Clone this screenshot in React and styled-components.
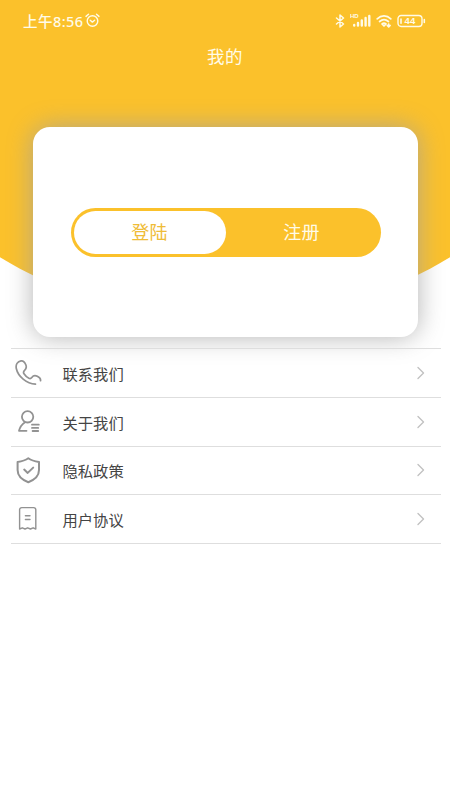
import React, { useState } from 'react'
import styled, { createGlobalStyle } from 'styled-components'

const GlobalStyle = createGlobalStyle`
  * {
    box-sizing: border-box;
  }
  body {
    margin: 0;
    background: #fff;
    font-family: 'Noto Sans CJK SC', sans-serif;
  }
`
const Page = styled.div`
  width: 450px;
  height: 800px;
  margin: 0 auto;
  overflow: hidden;
  background: #fff;
`
const Header = styled.header`
  height: 320px;
  background: #fbc12b;
  color: #fffbe8;
  clip-path: circle(435px at 50% -115px);
`
const StatusBar = styled.div`
  display: flex;
  align-items: center;
  justify-content: space-between;
  height: 40px;
  padding: 1px 24px 0 23px;
`
const StatusGroup = styled.div`
  display: flex;
  align-items: center;
  gap: ${(props) => props.$gap}px;
`
const Clock = styled.span`
  font-family: 'Noto Sans', 'Noto Sans CJK SC', sans-serif;
  font-size: 14.5px;
  font-weight: 500;
  line-height: 20px;
  letter-spacing: 0.45px;
`
const Title = styled.h1`
  margin: 3px 0 0;
  font-size: 17.5px;
  font-weight: 400;
  line-height: 26px;
  letter-spacing: 0.5px;
  text-align: center;
`
const LoginCard = styled.section`
  display: flex;
  align-items: center;
  justify-content: center;
  position: relative;
  width: 385px;
  height: 210px;
  margin: -193px 0 0 33px;
  border-radius: 17px;
  background: #fff;
  box-shadow: 0 0 26px rgba(160, 160, 160, 0.8);
`
const Switch = styled.div`
  display: flex;
  width: 310px;
  height: 49px;
  padding: 3px;
  border-radius: 25px;
  background: #fbc12b;
`
const SwitchBtn = styled.button`
  flex: 1;
  padding: 0 0 2px;
  border: none;
  border-radius: 22px;
  background: ${(props) => (props.$active ? '#fff' : 'transparent')};
  color: ${(props) => (props.$active ? '#efbc38' : '#fffbe8')};
  font-family: inherit;
  font-size: 18px;
  letter-spacing: 0.3px;
  cursor: pointer;
`
const Menu = styled.ul`
  position: relative;
  margin: 11px 9px 0 11px;
  padding: 0;
  list-style: none;
  border-top: 1px solid #dedede;
`
const MenuItem = styled.li`
  display: flex;
  align-items: center;
  height: 48.75px;
  padding: 0 15px 0 3px;
  border-bottom: 1px solid #dedede;
  cursor: pointer;
`
const MenuName = styled.span`
  flex: 1;
  margin-left: 20.5px;
  color: #444;
  font-size: 15.3px;
  line-height: 24px;
`
const Icon = styled.svg`
  display: block;
  flex: none;
  fill: none;
  stroke: currentColor;
  stroke-linecap: round;
  stroke-linejoin: round;
`
const MenuIcon = styled(Icon)`
  color: #929292;
`
const Arrow = styled(Icon)`
  color: #c2c2c2;
`

function AlarmIcon() {
  return (
    <Icon width="15" height="15" viewBox="0 0 15 15" strokeWidth="1.4">
      <circle cx="7.5" cy="8" r="5.3" />
      <path d="M5.2 7.3l2.2 1.8 2.2-1.8M1 3.4L3.5 1.3M14 3.4l-2.5-2.1" />
    </Icon>
  )
}

function BluetoothIcon() {
  return (
    <Icon width="10" height="14" viewBox="0 0 10 14" strokeWidth="1.5">
      <path d="M1.5 4l7 6L5 13V1l3.5 3-7 6" />
    </Icon>
  )
}

const HdText = styled.text`
  fill: currentColor;
  stroke: none;
  font-family: 'Liberation Sans', sans-serif;
  font-size: 6px;
  font-weight: 700;
`

function SignalIcon() {
  return (
    <Icon width="21" height="15" viewBox="0 0 21 15" strokeWidth="2.4">
      <HdText x="0" y="5.3">HD</HdText>
      <path d="M4.2 12v.5M8 10v2.5M11.8 7.5v5M15.600 5v7.500M19.300 3v9.500" />
    </Icon>
  )
}

function WifiIcon() {
  return (
    <Icon width="16" height="14" viewBox="0 0 16 14" strokeWidth="1.7">
      <path d="M1.2 4.8c4-3.8 9.6-3.8 13.6 0M3.6 7.5c2.7-2.4 6.1-2.4 8.8 0M6 10c1.3-1 2.7-1 4 0L8 12zM12.7 10v2.6M11.3 11.5l1.4 1.4 1.4-1.4" />
    </Icon>
  )
}

const BatteryText = styled(HdText)`
  font-size: 9.5px;
`

function BatteryIcon() {
  return (
    <Icon width="29" height="14" viewBox="0 0 29 14" strokeWidth="1.4">
      <rect x="1" y="1.5" width="24" height="11" rx="3.2" />
      <path d="M27.3 5.5v3M4 5v4.2" strokeWidth="1.6" />
      <BatteryText x="7.6" y="10.4">44</BatteryText>
    </Icon>
  )
}

function PhoneIcon() {
  return (
    <MenuIcon width="28" height="28" viewBox="0 0 28 28" strokeWidth="1.7">
      <path d="M21.500 25.200C12.500 24.500 4 17.500 2.300 9.500 1.500 5.500 3.500 2.300 7 1.900c2.500-.3 4 1.600 4.900 4.100.9 2.400.2 4-1.300 5.400-1.300 1.200-1.500 2-.6 3.400 1.200 1.900 2.900 3.500 4.900 4.500 1.300.7 2 .4 2.900-.8 1.400-1.900 3.300-2.300 5.500-1.200 2.500 1.200 3.700 2.300 3.200 4.400" />
    </MenuIcon>
  )
}

function AboutIcon() {
  return (
    <MenuIcon width="28" height="28" viewBox="0 0 28 28" strokeWidth="1.8">
      <circle cx="13.6" cy="8.8" r="5.7" />
      <path d="M10.700 14.400c-2.700 1.800-4.700 4.400-5.700 8.400h7.500M18 16.700h6.800M18 19.900h6.200M18.600 23h5.600" />
    </MenuIcon>
  )
}

function ShieldIcon() {
  return (
    <MenuIcon width="28" height="28" viewBox="0 0 28 28" strokeWidth="2">
      <path d="M14.300 2.200c3.200 2.300 6.700 3.100 10.700 3.700v8.200c0 6.100-4.400 9.800-10.700 12.100C8 23.900 3.600 20.200 3.600 14.100V5.900c4-.6 7.500-1.400 10.700-3.700z" />
      <path d="M10.200 13.600l3.500 3.300 5.500-5.300" />
    </MenuIcon>
  )
}

function AgreementIcon() {
  return (
    <MenuIcon width="28" height="28" viewBox="0 0 28 28" strokeWidth="1.4">
      <path d="M5.600 24V4.800c0-1.500.8-2.200 2.200-2.200h11.800c1.400 0 2.200.7 2.200 2.200V24l-2.700-1.200-2.700 1.200-2.700-1.200L11 24l-2.700-1.200zM11.400 10.700h4.600M11.400 14.500h4.600" />
    </MenuIcon>
  )
}

const menuList = [
  { name: '联系我们', icon: PhoneIcon },
  { name: '关于我们', icon: AboutIcon },
  { name: '隐私政策', icon: ShieldIcon },
  { name: '用户协议', icon: AgreementIcon },
]

function App() {
  const [active, setActive] = useState('登陆')

  return (
    <>
      <GlobalStyle />
      <Page>
        <Header>
          <StatusBar>
            <StatusGroup $gap={1.5}>
              <Clock>上午8:56</Clock>
              <AlarmIcon />
            </StatusGroup>
            <StatusGroup $gap={5}>
              <BluetoothIcon />
              <SignalIcon />
              <WifiIcon />
              <BatteryIcon />
            </StatusGroup>
          </StatusBar>
          <Title>我的</Title>
        </Header>
        <LoginCard>
          <Switch>
            {['登陆', '注册'].map((name) => (
              <SwitchBtn
                key={name}
                $active={active === name}
                onClick={() => setActive(name)}
              >
                {name}
              </SwitchBtn>
            ))}
          </Switch>
        </LoginCard>
        <Menu>
          {menuList.map(({ name, icon: ItemIcon }) => (
            <MenuItem key={name}>
              <ItemIcon />
              <MenuName>{name}</MenuName>
              <Arrow width="10" height="14" viewBox="0 0 10 14" strokeWidth="1.4">
                <path d="M2 1.5L7.5 7 2 12.5" />
              </Arrow>
            </MenuItem>
          ))}
        </Menu>
      </Page>
    </>
  )
}
export default App
